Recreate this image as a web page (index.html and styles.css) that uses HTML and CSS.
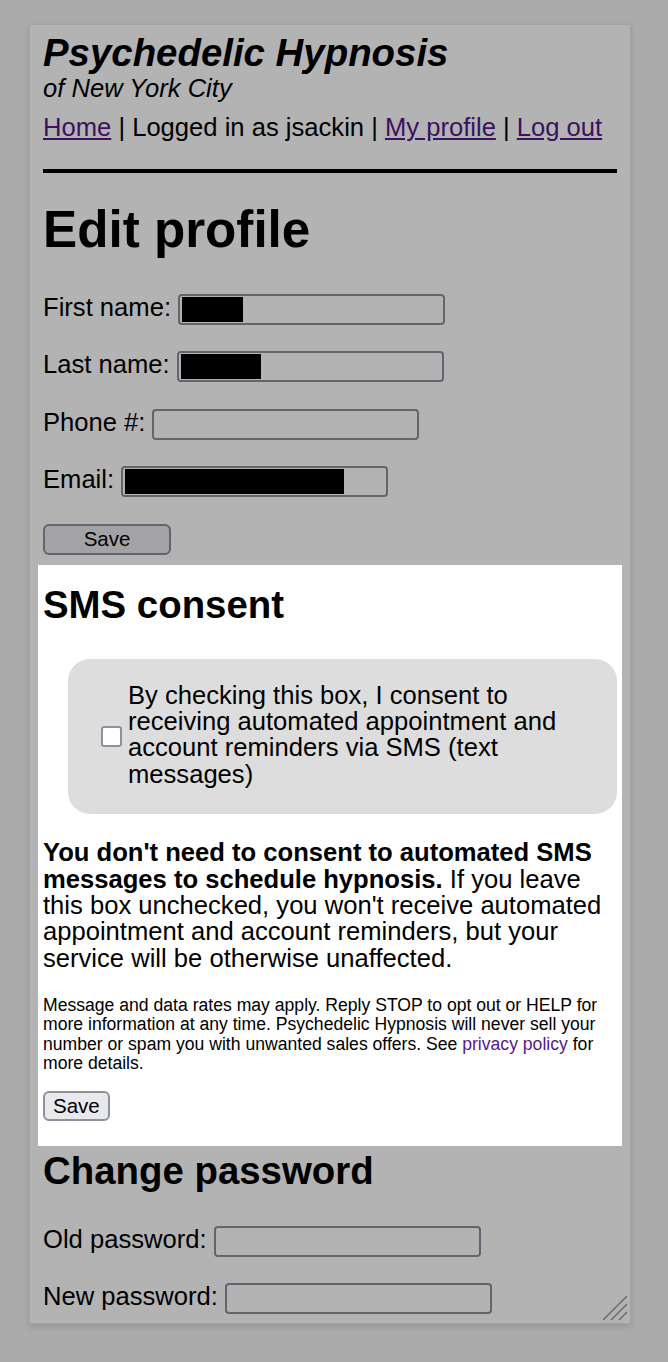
FILE: index.html
```html
<!DOCTYPE html>
<html lang="en">
<head>
<meta charset="utf-8">
<title>Edit profile</title>
<link rel="stylesheet" href="styles.css">
</head>
<body>
<div class="frame">
  <div class="page">
    <header class="site">
      <div class="title">Psychedelic Hypnosis</div>
      <div class="subtitle">of New York City</div>
      <nav class="nav"><a href="#">Home</a> | Logged in as jsackin | <a href="#">My profile</a> | <a href="#">Log out</a></nav>
    </header>
    <hr class="rule">
    <h1 class="h1">Edit profile</h1>
    <div class="fields">
      <div class="row"><span class="label">First name:</span><span class="field field-first"><span class="redact r-first"></span></span></div>
      <div class="row"><span class="label">Last name:</span><span class="field"><span class="redact r-last"></span></span></div>
      <div class="row"><span class="label">Phone #:</span><span class="field"></span></div>
      <div class="row"><span class="label">Email:</span><span class="field"><span class="redact r-email"></span></span></div>
      <div class="row"><button class="btn btn-dim" type="button">Save</button></div>
    </div>
    <section class="sms">
      <h2 class="h2">SMS consent</h2>
      <div class="consent-box">
        <input class="check" type="checkbox">
        <span class="consent-text">By checking this box, I consent to receiving automated appointment and account reminders via SMS (text messages)</span>
      </div>
      <p class="note"><strong>You don't need to consent to automated SMS messages to schedule hypnosis.</strong> If you leave this box unchecked, you won't receive automated appointment and account reminders, but your service will be otherwise unaffected.</p>
      <p class="fine">Message and data rates may apply. Reply STOP to opt out or HELP for more information at any time. Psychedelic Hypnosis will never sell your number or spam you with unwanted sales offers. See <a class="plain-link" href="#">privacy policy</a> for more details.</p>
      <button class="btn btn-live" type="button">Save</button>
    </section>
    <h2 class="h2 h2-pw">Change password</h2>
    <div class="fields fields-pw">
      <div class="row"><span class="label">Old password:</span><span class="field"></span></div>
      <div class="row"><span class="label">New password:</span><span class="field"></span></div>
    </div>
  </div>
  <svg class="grip" width="28" height="28" viewBox="0 0 28 28">
    <line x1="2" y1="26" x2="26" y2="2" stroke="#6e6e6e" stroke-width="1.6"/>
    <line x1="10" y1="26" x2="26" y2="10" stroke="#6e6e6e" stroke-width="1.6"/>
    <line x1="18" y1="26" x2="26" y2="18" stroke="#6e6e6e" stroke-width="1.6"/>
  </svg>
</div>
</body>
</html>
```

FILE: styles.css
```css
html, body {
  margin: 0;
  padding: 0;
}

body {
  background: #ababab;
  font-family: "Liberation Sans", Arial, Helvetica, sans-serif;
  color: #000;
  height: 1362px;
  overflow: hidden;
}

.frame {
  position: relative;
  margin: 24px 0 0 29px;
  width: 602px;
  height: 1300px;
  box-sizing: border-box;
  border: 1px solid #a3a3a3;
  background: #b3b3b3;
  box-shadow: 0 3px 6px rgba(0, 0, 0, 0.12);
  overflow: hidden;
}

.page {
  padding: 7px 13px 0 13px;
  font-size: 25.6px;
}

.title {
  font-size: 38.4px;
  font-weight: bold;
  font-style: italic;
  line-height: 42px;
}

.subtitle {
  font-style: italic;
  line-height: 29px;
}

.nav {
  margin-top: 10px;
  line-height: 29px;
}

.nav a {
  color: #3b1261;
  text-decoration: underline;
}

.rule {
  margin: 27px 0 0 0;
  border: 0;
  height: 4px;
  background: #000;
}

.h1 {
  margin: 27px 0 0 0;
  font-size: 51.2px;
  line-height: 59px;
  font-weight: bold;
}

.fields {
  margin-top: 35px;
  display: flex;
  flex-direction: column;
  gap: 26.4px;
}

.row {
  display: flex;
  align-items: flex-start;
  gap: 7px;
  height: 31px;
}

.label {
  line-height: 29px;
  margin-top: -1px;
  white-space: nowrap;
}

.field {
  display: flex;
  align-items: stretch;
  box-sizing: border-box;
  width: 267px;
  height: 31px;
  border: 2px solid #64646e;
  border-radius: 4px;
  background: #b3b3b3;
  padding: 1px 0 1px 2px;
}

.redact {
  display: block;
  background: #000;
}

.r-first { width: 61px; }
.r-last { width: 80px; }
.r-email { width: 219px; }

.btn {
  font-family: "Liberation Sans", Arial, Helvetica, sans-serif;
  font-size: 20.5px;
  color: #000;
  box-sizing: border-box;
  border-radius: 6px;
  padding: 0;
  line-height: 1;
}

.btn-dim {
  width: 128px;
  height: 31px;
  background: #a3a3a6;
  border: 2px solid #64646e;
}

.sms {
  margin: 10px -5px 0 -5px;
  padding: 18px 5px 25px 5px;
  background: #fff;
}

.h2 {
  margin: 0;
  font-size: 38.4px;
  line-height: 44px;
  font-weight: bold;
}

.consent-box {
  margin: 32px 0 0 25px;
  display: flex;
  align-items: center;
  gap: 6px;
  padding: 23px 20px 27px 33px;
  background: #ddd;
  border-radius: 22px;
}

.check {
  appearance: none;
  -webkit-appearance: none;
  flex: none;
  margin: 0;
  width: 21px;
  height: 21px;
  box-sizing: border-box;
  border: 2px solid #8f8f9d;
  border-radius: 3px;
  background: #fff;
  position: relative;
  top: 2px;
}

.consent-text {
  line-height: 26.4px;
}

.note {
  margin: 25px 0 0 0;
  line-height: 26.4px;
}

.fine {
  margin: 25px 0 0 0;
  font-size: 17.6px;
  line-height: 19.2px;
}

.plain-link {
  color: #551a8b;
  text-decoration: none;
}

.btn-live {
  margin-top: 18px;
  height: 30px;
  padding: 0 8px;
  background: #e9e9ed;
  border: 2px solid #8f8f9d;
  border-radius: 6px;
  display: block;
}

.h2-pw {
  margin-top: 3px;
}

.fields-pw {
  margin-top: 33px;
}

.grip {
  position: absolute;
  right: 1px;
  bottom: 1px;
}
```
